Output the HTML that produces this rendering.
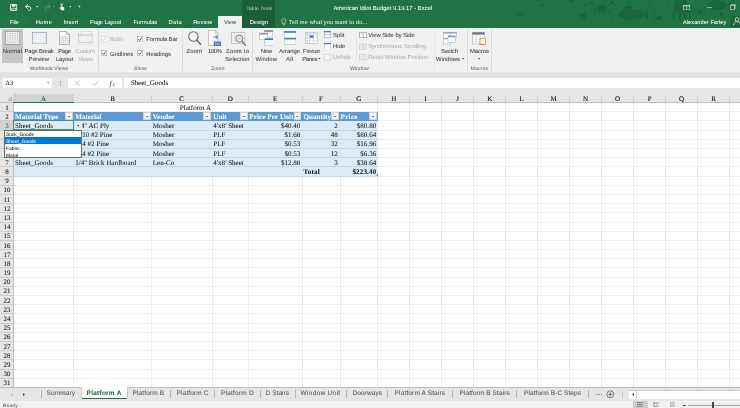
<!DOCTYPE html><html><head><meta charset="utf-8"><title>American Idiot Budget 9.19.17 - Excel</title><style>
*{box-sizing:border-box;margin:0;padding:0}
html,body{width:740px;height:408px;overflow:hidden;background:#fff}
body{position:relative;font-family:"Liberation Sans",sans-serif;color:#444;text-rendering:geometricPrecision;}
.a{position:absolute;white-space:nowrap;}
.t{position:absolute;white-space:nowrap;line-height:1;}
</style></head><body><div id="app" style="position:absolute;left:0;top:0;width:740px;height:408px;will-change:transform">
<div class="a" style="left:0px;top:0px;width:740px;height:27.6px;background:#217346;"></div>
<svg class="a" style="left:440px;top:0px;" width="300" height="27.6" viewBox="0 0 300 27.6"><circle cx="102.5" cy="5" r="1.5" fill="#1b653b"/><circle cx="120" cy="16" r="1" fill="#1b653b"/><circle cx="131" cy="0.3" r="2" fill="#1b653b"/><circle cx="146" cy="5" r="1" fill="#1b653b"/><circle cx="172" cy="20" r="0.9" fill="#1b653b"/><circle cx="209" cy="3" r="1.1" fill="#1b653b"/><circle cx="215" cy="11" r="0.8" fill="#1b653b"/><circle cx="224" cy="9" r="1" fill="#1b653b"/><circle cx="228" cy="4" r="0.9" fill="#1b653b"/><circle cx="296" cy="22" r="0" fill="#1b653b"/><ellipse cx="162" cy="8" rx="5" ry="3.2" fill="#1b653b"/><path d="M156 6L152 3M168 6L172 2.5M157 10L154 13M167 10L170 13M160 11L159 14M164 11L165 14" stroke="#1b653b" stroke-width="1.1" fill="none"/><circle cx="151.5" cy="2.5" r="1.5" fill="#1b653b"/><circle cx="172.5" cy="2" r="1.5" fill="#1b653b"/><path d="M139 17a3.7 3.7 0 0 1 7.4 0Z" fill="#1b653b"/><path d="M140 17v4M142.70000000000005 17v5M145.39999999999998 17v4" stroke="#1b653b" stroke-width="1" fill="none"/><ellipse cx="191" cy="14.5" rx="12.5" ry="5.2" fill="#1b653b"/><path d="M201 14.5L208 9.5V19.5Z" fill="#1b653b"/><rect x="185" y="6.5" width="7" height="4" fill="#1b653b"/><path d="M188.5 7V2.5H191" stroke="#1b653b" stroke-width="1" fill="none"/><ellipse cx="219" cy="18" rx="3" ry="2" fill="#1b653b"/><path d="M216 17L213 14M222 17L225 14M216 19L214 22M222 19L224 22" stroke="#1b653b" stroke-width="0.8" fill="none"/><ellipse cx="241" cy="6" rx="7.2" ry="7.6" fill="#1b653b"/><path d="M236 11Q232 15 234.5 19.5M240 13Q239 18 241 21M244.5 13Q246 17 244.5 20.5M247 10Q251.5 14 250 18" stroke="#1b653b" stroke-width="1.8" fill="none" stroke-linecap="round"/><ellipse cx="277" cy="5.2" rx="9.8" ry="4.9" fill="#1b653b"/><path d="M285.5 5.2L293 0.5V10.5Z" fill="#1b653b"/><ellipse cx="260.5" cy="12.5" rx="2.6" ry="1.6" fill="#1b653b"/><path d="M258 11.5L256 9M263 11.5L265 9M258 13.5L256.5 15.5M263 13.5L264.5 15.5" stroke="#1b653b" stroke-width="0.8" fill="none"/><circle cx="281.6" cy="14.2" r="2" fill="#1b653b"/><g opacity="0.7"><ellipse cx="80" cy="14.5" rx="2.6" ry="1.6" fill="#1b653b"/><path d="M77.5 13.5L75 11M82.5 13.5L85 11M77.5 15.5L75.5 17.5M82.5 15.5L84.5 17.5" stroke="#1b653b" stroke-width="0.8" fill="none"/></g></svg>
<div class="a" style="left:242px;top:0px;width:32.7px;height:27.6px;background:#1b5e3a;"></div>
<div class="a" style="left:0px;top:16px;width:28.9px;height:11.6px;background:#23764a;"></div>
<div class="a" style="left:218px;top:16.2px;width:24px;height:11.4px;background:#f1f1f1;"></div>
<div class="t" style="left:333.4px;top:7px;font-size:5.9px;font-family:'Liberation Sans',sans-serif;color:#fff;text-shadow:0 0 0.4px rgba(255,255,255,0.28);">American Idiot Budget 9.19.17 - Excel</div>
<div class="t" style="left:246.4px;top:8px;font-size:4.8px;font-family:'Liberation Sans',sans-serif;color:#b4cfbf;letter-spacing:0.19px;text-shadow:0 0 0.4px rgba(180,207,191,0.28);">Table Tools</div>
<div class="t" style="left:10.0px;top:21px;font-size:5.7px;font-family:'Liberation Sans',sans-serif;color:#fff;letter-spacing:-0.09px;text-shadow:0 0 0.4px rgba(255,255,255,0.28);">File</div>
<div class="t" style="left:35.7px;top:21px;font-size:5.7px;font-family:'Liberation Sans',sans-serif;color:#fff;letter-spacing:0.33px;text-shadow:0 0 0.4px rgba(255,255,255,0.28);">Home</div>
<div class="t" style="left:63.7px;top:21px;font-size:5.7px;font-family:'Liberation Sans',sans-serif;color:#fff;letter-spacing:0.05px;text-shadow:0 0 0.4px rgba(255,255,255,0.28);">Insert</div>
<div class="t" style="left:90.0px;top:21px;font-size:5.7px;font-family:'Liberation Sans',sans-serif;color:#fff;letter-spacing:-0.09px;text-shadow:0 0 0.4px rgba(255,255,255,0.28);">Page Layout</div>
<div class="t" style="left:133.4px;top:21px;font-size:5.7px;font-family:'Liberation Sans',sans-serif;color:#fff;letter-spacing:0.01px;text-shadow:0 0 0.4px rgba(255,255,255,0.28);">Formulas</div>
<div class="t" style="left:168.6px;top:21px;font-size:5.7px;font-family:'Liberation Sans',sans-serif;color:#fff;letter-spacing:0.32px;text-shadow:0 0 0.4px rgba(255,255,255,0.28);">Data</div>
<div class="t" style="left:193.2px;top:21px;font-size:5.7px;font-family:'Liberation Sans',sans-serif;color:#fff;letter-spacing:0.04px;text-shadow:0 0 0.4px rgba(255,255,255,0.28);">Review</div>
<div class="t" style="left:249.7px;top:21px;font-size:5.7px;font-family:'Liberation Sans',sans-serif;color:#fff;letter-spacing:0.13px;text-shadow:0 0 0.4px rgba(255,255,255,0.28);">Design</div>
<div class="t" style="left:223.9px;top:21px;font-size:5.7px;font-family:'Liberation Sans',sans-serif;color:#217346;letter-spacing:-0.02px;text-shadow:0 0 0.4px rgba(33,115,70,0.28);">View</div>
<div class="t" style="left:289.1px;top:21px;font-size:5.7px;font-family:'Liberation Sans',sans-serif;color:#e2eee7;letter-spacing:0.12px;text-shadow:0 0 0.4px rgba(226,238,231,0.28);">Tell me what you want to do...</div>
<div class="t" style="left:683.0px;top:21px;font-size:5.5px;font-family:'Liberation Sans',sans-serif;color:#fff;letter-spacing:0.11px;text-shadow:0 0 0.4px rgba(255,255,255,0.28);">Alexander Farley</div>
<div class="a" style="left:0px;top:27.6px;width:740px;height:44.2px;background:#f1f1f1;"></div>
<div class="a" style="left:0px;top:71.8px;width:740px;height:6.2px;background:#e2e2e2;"></div>
<div class="a" style="left:0px;top:78px;width:740px;height:16.3px;background:#e6e6e6;"></div>
<div class="a" style="left:2px;top:29px;width:21.3px;height:33.6px;background:#c6c6c6;"></div>
<div class="a" style="left:98.1px;top:29.5px;width:0.6px;height:41px;background:#dadada;"></div>
<div class="a" style="left:182.3px;top:29.5px;width:0.6px;height:41px;background:#dadada;"></div>
<div class="a" style="left:252.1px;top:29.5px;width:0.6px;height:41px;background:#dadada;"></div>
<div class="a" style="left:466.7px;top:29.5px;width:0.6px;height:41px;background:#dadada;"></div>
<div class="a" style="left:491.2px;top:29.5px;width:0.6px;height:41px;background:#dadada;"></div>
<div class="a" style="left:355.8px;top:34px;width:0.5px;height:24px;background:#e6e6e6;"></div>
<div class="a" style="left:433.5px;top:30px;width:0.5px;height:40px;background:#e6e6e6;"></div>
<div class="t" style="left:2.7px;top:50px;font-size:5.9px;font-family:'Liberation Sans',sans-serif;color:#444;letter-spacing:0.06px;text-shadow:0 0 0.4px rgba(68,68,68,0.28);">Normal</div>
<div class="t" style="left:24.6px;top:50px;font-size:5.9px;font-family:'Liberation Sans',sans-serif;color:#444;letter-spacing:-0.18px;text-shadow:0 0 0.4px rgba(68,68,68,0.28);">Page Break</div>
<div class="t" style="left:28.6px;top:58px;font-size:5.9px;font-family:'Liberation Sans',sans-serif;color:#444;letter-spacing:-0.1px;text-shadow:0 0 0.4px rgba(68,68,68,0.28);">Preview</div>
<div class="t" style="left:58.29px;top:50px;font-size:5.9px;font-family:'Liberation Sans',sans-serif;color:#444;letter-spacing:-0.35px;text-shadow:0 0 0.4px rgba(68,68,68,0.28);">Page</div>
<div class="t" style="left:55.9px;top:58px;font-size:5.9px;font-family:'Liberation Sans',sans-serif;color:#444;letter-spacing:-0.08px;text-shadow:0 0 0.4px rgba(68,68,68,0.28);">Layout</div>
<div class="t" style="left:75.6px;top:50px;font-size:5.9px;font-family:'Liberation Sans',sans-serif;color:#b3b3b3;letter-spacing:-0.19px;text-shadow:0 0 0.4px rgba(179,179,179,0.28);">Custom</div>
<div class="t" style="left:78.2px;top:58px;font-size:5.9px;font-family:'Liberation Sans',sans-serif;color:#b3b3b3;letter-spacing:-0.21px;text-shadow:0 0 0.4px rgba(179,179,179,0.28);">Views</div>
<div class="t" style="left:186.6px;top:50px;font-size:5.9px;font-family:'Liberation Sans',sans-serif;color:#444;letter-spacing:0.11px;text-shadow:0 0 0.4px rgba(68,68,68,0.28);">Zoom</div>
<div class="t" style="left:207.9px;top:50px;font-size:5.9px;font-family:'Liberation Sans',sans-serif;color:#444;letter-spacing:-0.33px;text-shadow:0 0 0.4px rgba(68,68,68,0.28);">100%</div>
<div class="t" style="left:226.1px;top:50px;font-size:5.9px;font-family:'Liberation Sans',sans-serif;color:#444;letter-spacing:0.21px;text-shadow:0 0 0.4px rgba(68,68,68,0.28);">Zoom to</div>
<div class="t" style="left:225.1px;top:58px;font-size:5.9px;font-family:'Liberation Sans',sans-serif;color:#444;letter-spacing:0.04px;text-shadow:0 0 0.4px rgba(68,68,68,0.28);">Selection</div>
<div class="t" style="left:260.7px;top:50px;font-size:5.9px;font-family:'Liberation Sans',sans-serif;color:#444;letter-spacing:-0.2px;text-shadow:0 0 0.4px rgba(68,68,68,0.28);">New</div>
<div class="t" style="left:255.5px;top:58px;font-size:5.9px;font-family:'Liberation Sans',sans-serif;color:#444;letter-spacing:0.1px;text-shadow:0 0 0.4px rgba(68,68,68,0.28);">Window</div>
<div class="t" style="left:279.3px;top:50px;font-size:5.9px;font-family:'Liberation Sans',sans-serif;color:#444;letter-spacing:-0.05px;text-shadow:0 0 0.4px rgba(68,68,68,0.28);">Arrange</div>
<div class="t" style="left:286.1px;top:58px;font-size:5.9px;font-family:'Liberation Sans',sans-serif;color:#444;letter-spacing:0.22px;text-shadow:0 0 0.4px rgba(68,68,68,0.28);">All</div>
<div class="t" style="left:303.1px;top:50px;font-size:5.9px;font-family:'Liberation Sans',sans-serif;color:#444;letter-spacing:-0.23px;text-shadow:0 0 0.4px rgba(68,68,68,0.28);">Freeze</div>
<div class="t" style="left:302.14px;top:58px;font-size:5.9px;font-family:'Liberation Sans',sans-serif;color:#444;letter-spacing:-0.35px;text-shadow:0 0 0.4px rgba(68,68,68,0.28);">Panes</div>
<div class="t" style="left:441.1px;top:50px;font-size:5.9px;font-family:'Liberation Sans',sans-serif;color:#444;letter-spacing:-0.06px;text-shadow:0 0 0.4px rgba(68,68,68,0.28);">Switch</div>
<div class="t" style="left:436.1px;top:58px;font-size:5.9px;font-family:'Liberation Sans',sans-serif;color:#444;letter-spacing:-0.01px;text-shadow:0 0 0.4px rgba(68,68,68,0.28);">Windows</div>
<div class="t" style="left:469.9px;top:50px;font-size:5.9px;font-family:'Liberation Sans',sans-serif;color:#444;letter-spacing:-0.03px;text-shadow:0 0 0.4px rgba(68,68,68,0.28);">Macros</div>
<div class="t" style="left:29.6px;top:67px;font-size:5.1px;font-family:'Liberation Sans',sans-serif;color:#6a6a6a;letter-spacing:0.05px;text-shadow:0 0 0.4px rgba(106,106,106,0.28);">Workbook Views</div>
<div class="t" style="left:134.0px;top:67px;font-size:5.1px;font-family:'Liberation Sans',sans-serif;color:#6a6a6a;letter-spacing:0.01px;text-shadow:0 0 0.4px rgba(106,106,106,0.28);">Show</div>
<div class="t" style="left:211.0px;top:67px;font-size:5.1px;font-family:'Liberation Sans',sans-serif;color:#6a6a6a;letter-spacing:0.15px;text-shadow:0 0 0.4px rgba(106,106,106,0.28);">Zoom</div>
<div class="t" style="left:350.0px;top:67px;font-size:5.1px;font-family:'Liberation Sans',sans-serif;color:#6a6a6a;letter-spacing:0.09px;text-shadow:0 0 0.4px rgba(106,106,106,0.28);">Window</div>
<div class="t" style="left:470.5px;top:67px;font-size:5.1px;font-family:'Liberation Sans',sans-serif;color:#6a6a6a;letter-spacing:0.16px;text-shadow:0 0 0.4px rgba(106,106,106,0.28);">Macros</div>
<svg class="a" style="left:318.4px;top:58.2px;" width="2.6" height="1.7" viewBox="0 0 2.6 1.7"><path d="M0 0H2.6L1.3 1.6Z" fill="#555"/></svg>
<svg class="a" style="left:461.9px;top:58.2px;" width="2.6" height="1.7" viewBox="0 0 2.6 1.7"><path d="M0 0H2.6L1.3 1.6Z" fill="#555"/></svg>
<svg class="a" style="left:478.1px;top:58.2px;" width="2.6" height="1.7" viewBox="0 0 2.6 1.7"><path d="M0 0H2.6L1.3 1.6Z" fill="#555"/></svg>
<svg class="a" style="left:101.3px;top:35.5px;" width="6.2" height="6.2" viewBox="0 0 6.2 6.2"><rect x="0.3" y="0.3" width="5.6" height="5.6" fill="#fdfdfd" stroke="#d2d2d2" stroke-width="0.5"/><path d="M1.3 3.1L2.6 4.5L4.9 1.5" fill="none" stroke="#c4c4c4" stroke-width="0.8"/></svg>
<svg class="a" style="left:101.3px;top:50.3px;" width="6.2" height="6.2" viewBox="0 0 6.2 6.2"><rect x="0.3" y="0.3" width="5.6" height="5.6" fill="#fdfdfd" stroke="#8e8e8e" stroke-width="0.5"/><path d="M1.3 3.1L2.6 4.5L4.9 1.5" fill="none" stroke="#2e2e2e" stroke-width="0.8"/></svg>
<svg class="a" style="left:137.3px;top:35.5px;" width="6.2" height="6.2" viewBox="0 0 6.2 6.2"><rect x="0.3" y="0.3" width="5.6" height="5.6" fill="#fdfdfd" stroke="#8e8e8e" stroke-width="0.5"/><path d="M1.3 3.1L2.6 4.5L4.9 1.5" fill="none" stroke="#2e2e2e" stroke-width="0.8"/></svg>
<svg class="a" style="left:137.3px;top:50.3px;" width="6.2" height="6.2" viewBox="0 0 6.2 6.2"><rect x="0.3" y="0.3" width="5.6" height="5.6" fill="#fdfdfd" stroke="#8e8e8e" stroke-width="0.5"/><path d="M1.3 3.1L2.6 4.5L4.9 1.5" fill="none" stroke="#2e2e2e" stroke-width="0.8"/></svg>
<div class="t" style="left:110.0px;top:38px;font-size:5.9px;font-family:'Liberation Sans',sans-serif;color:#b3b3b3;letter-spacing:-0.15px;text-shadow:0 0 0.4px rgba(179,179,179,0.28);">Ruler</div>
<div class="t" style="left:110.0px;top:53px;font-size:5.9px;font-family:'Liberation Sans',sans-serif;color:#444;letter-spacing:-0.01px;text-shadow:0 0 0.4px rgba(68,68,68,0.28);">Gridlines</div>
<div class="t" style="left:146.3px;top:38px;font-size:5.9px;font-family:'Liberation Sans',sans-serif;color:#444;letter-spacing:-0.12px;text-shadow:0 0 0.4px rgba(68,68,68,0.28);">Formula Bar</div>
<div class="t" style="left:146.3px;top:53px;font-size:5.9px;font-family:'Liberation Sans',sans-serif;color:#444;letter-spacing:-0.03px;text-shadow:0 0 0.4px rgba(68,68,68,0.28);">Headings</div>
<div class="t" style="left:333.0px;top:34px;font-size:5.9px;font-family:'Liberation Sans',sans-serif;color:#444;letter-spacing:-0.04px;text-shadow:0 0 0.4px rgba(68,68,68,0.28);">Split</div>
<div class="t" style="left:333.0px;top:45px;font-size:5.9px;font-family:'Liberation Sans',sans-serif;color:#444;letter-spacing:0.06px;text-shadow:0 0 0.4px rgba(68,68,68,0.28);">Hide</div>
<div class="t" style="left:333.0px;top:56px;font-size:5.9px;font-family:'Liberation Sans',sans-serif;color:#b3b3b3;letter-spacing:-0.08px;text-shadow:0 0 0.4px rgba(179,179,179,0.28);">Unhide</div>
<div class="t" style="left:368.2px;top:34px;font-size:5.9px;font-family:'Liberation Sans',sans-serif;color:#444;letter-spacing:-0.05px;text-shadow:0 0 0.4px rgba(68,68,68,0.28);">View Side by Side</div>
<div class="t" style="left:368.2px;top:45px;font-size:5.9px;font-family:'Liberation Sans',sans-serif;color:#b3b3b3;letter-spacing:-0.04px;text-shadow:0 0 0.4px rgba(179,179,179,0.28);">Synchronous Scrolling</div>
<div class="t" style="left:368.2px;top:56px;font-size:5.9px;font-family:'Liberation Sans',sans-serif;color:#b3b3b3;letter-spacing:-0.02px;text-shadow:0 0 0.4px rgba(179,179,179,0.28);">Reset Window Position</div>
<svg class="a" style="left:4.5px;top:31.1px;" width="15.2" height="13.7" viewBox="0 0 15.2 13.7"><rect x="0.4" y="0.4" width="14.4" height="12.9" fill="#fff" stroke="#8a8a8a" stroke-width="0.7"/><path d="M2.85 0.4V13.3" stroke="#b2b2b2" stroke-width="0.45"/><path d="M5.300000000000001 0.4V13.3" stroke="#b2b2b2" stroke-width="0.45"/><path d="M7.750000000000001 0.4V13.3" stroke="#b2b2b2" stroke-width="0.45"/><path d="M10.200000000000001 0.4V13.3" stroke="#b2b2b2" stroke-width="0.45"/><path d="M12.65 0.4V13.3" stroke="#b2b2b2" stroke-width="0.45"/><path d="M0.4 2.55H14.8" stroke="#b2b2b2" stroke-width="0.45"/><path d="M0.4 4.7H14.8" stroke="#b2b2b2" stroke-width="0.45"/><path d="M0.4 6.85H14.8" stroke="#b2b2b2" stroke-width="0.45"/><path d="M0.4 9.0H14.8" stroke="#b2b2b2" stroke-width="0.45"/><path d="M0.4 11.15H14.8" stroke="#b2b2b2" stroke-width="0.45"/></svg>
<svg class="a" style="left:32px;top:32px;" width="15" height="12.2" viewBox="0 0 15 12.2"><rect x="0.4" y="0.4" width="14.2" height="11.4" fill="#fff" stroke="#9a9a9a" stroke-width="0.7"/><rect x="1.2" y="1.2" width="1.5" height="1.3" fill="#cfe0f4"/><rect x="1.2" y="3.0" width="1.5" height="1.3" fill="#cfe0f4"/><rect x="1.2" y="4.8" width="1.5" height="1.3" fill="#cfe0f4"/><rect x="1.2" y="6.9" width="1.5" height="1.3" fill="#cfe0f4"/><rect x="1.2" y="8.7" width="1.5" height="1.3" fill="#cfe0f4"/><rect x="1.2" y="10.2" width="1.5" height="1.3" fill="#cfe0f4"/><rect x="3.2" y="1.2" width="1.5" height="1.3" fill="#cfe0f4"/><rect x="3.2" y="3.0" width="1.5" height="1.3" fill="#cfe0f4"/><rect x="3.2" y="4.8" width="1.5" height="1.3" fill="#cfe0f4"/><rect x="3.2" y="6.9" width="1.5" height="1.3" fill="#cfe0f4"/><rect x="3.2" y="8.7" width="1.5" height="1.3" fill="#cfe0f4"/><rect x="3.2" y="10.2" width="1.5" height="1.3" fill="#cfe0f4"/><rect x="5.9" y="1.2" width="1.5" height="1.3" fill="#cfe0f4"/><rect x="5.9" y="3.0" width="1.5" height="1.3" fill="#cfe0f4"/><rect x="5.9" y="4.8" width="1.5" height="1.3" fill="#cfe0f4"/><rect x="5.9" y="6.9" width="1.5" height="1.3" fill="#cfe0f4"/><rect x="5.9" y="8.7" width="1.5" height="1.3" fill="#cfe0f4"/><rect x="5.9" y="10.2" width="1.5" height="1.3" fill="#cfe0f4"/><rect x="7.9" y="1.2" width="1.5" height="1.3" fill="#cfe0f4"/><rect x="7.9" y="3.0" width="1.5" height="1.3" fill="#cfe0f4"/><rect x="7.9" y="4.8" width="1.5" height="1.3" fill="#cfe0f4"/><rect x="7.9" y="6.9" width="1.5" height="1.3" fill="#cfe0f4"/><rect x="7.9" y="8.7" width="1.5" height="1.3" fill="#cfe0f4"/><rect x="7.9" y="10.2" width="1.5" height="1.3" fill="#cfe0f4"/><rect x="10.6" y="1.2" width="1.5" height="1.3" fill="#cfe0f4"/><rect x="10.6" y="3.0" width="1.5" height="1.3" fill="#cfe0f4"/><rect x="10.6" y="4.8" width="1.5" height="1.3" fill="#cfe0f4"/><rect x="10.6" y="6.9" width="1.5" height="1.3" fill="#cfe0f4"/><rect x="10.6" y="8.7" width="1.5" height="1.3" fill="#cfe0f4"/><rect x="10.6" y="10.2" width="1.5" height="1.3" fill="#cfe0f4"/><rect x="12.4" y="1.2" width="1.5" height="1.3" fill="#cfe0f4"/><rect x="12.4" y="3.0" width="1.5" height="1.3" fill="#cfe0f4"/><rect x="12.4" y="4.8" width="1.5" height="1.3" fill="#cfe0f4"/><rect x="12.4" y="6.9" width="1.5" height="1.3" fill="#cfe0f4"/><rect x="12.4" y="8.7" width="1.5" height="1.3" fill="#cfe0f4"/><rect x="12.4" y="10.2" width="1.5" height="1.3" fill="#cfe0f4"/></svg>
<svg class="a" style="left:59px;top:31.1px;" width="11" height="13.9" viewBox="0 0 11 13.9"><path d="M0.4 0.4H7.4L10.5 3.5V13.4H0.4Z" fill="#fff" stroke="#8a8a8a" stroke-width="0.7"/><path d="M7.4 0.4V3.5H10.5" fill="none" stroke="#8a8a8a" stroke-width="0.6"/><path d="M1.8 5.5H9.2M1.8 7.6H9.2M1.8 9.7H9.2M1.8 11.8H9.2M1.8 5.5V11.8M4.3 5.5V11.8M6.8 5.5V11.8M9.2 5.5V11.8" stroke="#b5b5b5" stroke-width="0.5" fill="none"/></svg>
<svg class="a" style="left:78px;top:31.4px;" width="15.2" height="13.7" viewBox="0 0 15.2 13.7"><rect x="2.2" y="0.4" width="11" height="9.5" fill="#f6f6f6" stroke="#cfcfcf" stroke-width="0.6"/><rect x="0.4" y="3" width="14.3" height="8.5" fill="#f3eef3" stroke="#c9c9c9" stroke-width="0.7"/><path d="M0.4 4.3H14.7" stroke="#c9c9c9" stroke-width="0.9"/><rect x="3.8" y="11.5" width="9.5" height="1.8" fill="none" stroke="#d4d4d4" stroke-width="0.5"/></svg>
<svg class="a" style="left:186px;top:30px;" width="18" height="17" viewBox="0 0 18 17"><circle cx="7.4" cy="6.5" r="4.7" fill="#f7f7f7" stroke="#6a6a6a" stroke-width="1.1"/><path d="M10.9 10.2L14.6 14.3" stroke="#6a6a6a" stroke-width="1.6" stroke-linecap="round"/></svg>
<svg class="a" style="left:208.2px;top:30px;" width="13.2" height="16.2" viewBox="0 0 13.2 16.2"><path d="M0.4 0.4H7.2L10 3.2V15.4H0.4Z" fill="#fff" stroke="#9a9a9a" stroke-width="0.6"/><path d="M7.2 0.4V3.2H10" fill="none" stroke="#9a9a9a" stroke-width="0.5"/><path d="M5.2 7H9.6M7.8 5L9.8 7L7.8 9" fill="none" stroke="#2b72c4" stroke-width="1"/><rect x="5.8" y="11.5" width="7.2" height="4.5" fill="#3b78c2"/><text x="9.4" y="15" font-size="3.2" fill="#dfe9f6" text-anchor="middle" font-family="Liberation Sans, sans-serif">100</text></svg>
<svg class="a" style="left:230.5px;top:32px;" width="15.5" height="14" viewBox="0 0 15.5 14"><rect x="0.4" y="0.4" width="13.4" height="11" fill="#fff" stroke="#a5a5a5" stroke-width="0.6"/><path d="M3.8 0.4V11.4M7.2 0.4V11.4M10.6 0.4V11.4M0.4 3.2H13.8M0.4 6H13.8M0.4 8.8H13.8" stroke="#bdbdbd" stroke-width="0.45"/><circle cx="8.3" cy="6.6" r="3.5" fill="#eef3fa" stroke="#707070" stroke-width="0.9"/><rect x="6.6" y="5" width="3.6" height="2.6" fill="#c3d8f0"/><path d="M11 9.4L14.6 13.2" stroke="#707070" stroke-width="1.3" stroke-linecap="round"/></svg>
<svg class="a" style="left:258.9px;top:30.3px;" width="14.6" height="15.6" viewBox="0 0 14.6 15.6"><rect x="5.2" y="0.4" width="8.6" height="6.6" fill="#fff" stroke="#a5a5a5" stroke-width="0.5"/><rect x="5.2" y="0.4" width="8.6" height="1.4" fill="#7a7a7a"/><rect x="0.4" y="3.1" width="8.4" height="6.6" fill="#fff" stroke="#a5a5a5" stroke-width="0.5"/><rect x="0.4" y="3.1" width="8.4" height="1.4" fill="#8a8a8a"/><rect x="5.8" y="8.4" width="8.4" height="6.8" fill="#fff" stroke="#a5a5a5" stroke-width="0.5"/><rect x="5.8" y="8.4" width="8.4" height="1.6" fill="#3b78c2"/></svg>
<svg class="a" style="left:283.7px;top:31px;" width="12.4" height="14" viewBox="0 0 12.4 14"><rect x="0.4" y="0.4" width="11.6" height="13.2" fill="#fff" stroke="#a5a5a5" stroke-width="0.5"/><rect x="0.2" y="0.2" width="12" height="1.6" fill="#3b78c2"/><rect x="0.2" y="6.8" width="12" height="1.6" fill="#3b78c2"/></svg>
<svg class="a" style="left:305.4px;top:32px;" width="13.3" height="11.9" viewBox="0 0 13.3 11.9"><rect x="0.4" y="0.4" width="12.4" height="11" fill="#fff" stroke="#a5a5a5" stroke-width="0.5"/><path d="M4.4 0.4V11.4M8.6 0.4V11.4M0.4 3.2H12.8M0.4 6H12.8M0.4 8.8H12.8" stroke="#bdbdbd" stroke-width="0.45"/><rect x="4.6" y="3.4" width="3.8" height="2.4" fill="#3b78c2"/><path d="M0.6 1.8H12.6M2.4 0.6V11.2" stroke="#6fa0d8" stroke-width="0.6" stroke-dasharray="1 0.8"/></svg>
<svg class="a" style="left:323.9px;top:31.4px;" width="7.2" height="6.8" viewBox="0 0 7.2 6.8"><rect x="0.3" y="0.3" width="6.5" height="6.1" fill="#fff" stroke="#8a8a8a" stroke-width="0.5"/><rect x="0.1" y="0.1" width="6.9" height="1.2" fill="#3b78c2"/><path d="M0.3 3.7H6.8" stroke="#8a8a8a" stroke-width="0.5"/></svg>
<svg class="a" style="left:323.9px;top:42.5px;" width="7.2" height="6.8" viewBox="0 0 7.2 6.8"><rect x="0.3" y="0.3" width="6.5" height="6.1" fill="#fff" stroke="#a5a5a5" stroke-width="0.5"/><rect x="0.1" y="0.1" width="6.9" height="1.2" fill="#3b78c2"/></svg>
<svg class="a" style="left:323.9px;top:54.1px;" width="7.2" height="6.8" viewBox="0 0 7.2 6.8"><rect x="0.3" y="0.3" width="6.5" height="6.1" fill="#f7f2f7" stroke="#c8c8c8" stroke-width="0.5"/></svg>
<svg class="a" style="left:359px;top:31.8px;" width="8" height="6" viewBox="0 0 8 6"><path d="M0.4 0.6H3.2L4 1.6L4.8 0.6H7.6V5.6H0.4Z" fill="#fff" stroke="#666" stroke-width="0.5"/><path d="M4 1.6V5.6" stroke="#666" stroke-width="0.5"/></svg>
<svg class="a" style="left:359px;top:42.8px;" width="8" height="7" viewBox="0 0 8 7"><path d="M0.4 1H3.8V6.4H0.4ZM4.6 1H7V6.4H4.6Z M2 2.4V5" fill="none" stroke="#bdbdbd" stroke-width="0.5"/><path d="M7.6 0.2V6.8" stroke="#c8c8c8" stroke-width="0.5"/></svg>
<svg class="a" style="left:359px;top:54.4px;" width="8" height="6" viewBox="0 0 8 6"><path d="M0.4 0.5H7.6V5.6H0.4Z M4 0.5V5.6M1.4 3H3M5 3H6.6" fill="none" stroke="#bdbdbd" stroke-width="0.5"/></svg>
<svg class="a" style="left:443.2px;top:32px;" width="14" height="12.6" viewBox="0 0 14 12.6"><rect x="0.4" y="0.4" width="7" height="11.6" fill="#fff" stroke="#a5a5a5" stroke-width="0.5"/><rect x="0.4" y="0.4" width="7" height="1" fill="#8a8a8a"/><rect x="7.4" y="0.4" width="6.2" height="5.6" fill="#fff" stroke="#a5a5a5" stroke-width="0.5"/><rect x="7.4" y="0.4" width="6.2" height="1" fill="#8a8a8a"/><rect x="0.4" y="6" width="4.6" height="1.2" fill="#9a9a9a"/><rect x="5" y="3.8" width="7.2" height="6.6" fill="#fff" stroke="#a5a5a5" stroke-width="0.5"/><rect x="5" y="3.8" width="7.2" height="1.5" fill="#6fa0d8"/></svg>
<svg class="a" style="left:471.9px;top:32px;" width="15" height="13.6" viewBox="0 0 15 13.6"><rect x="0.4" y="0.4" width="12" height="11.6" fill="#fff" stroke="#a5a5a5" stroke-width="0.5"/><rect x="0.4" y="0.4" width="12" height="2.2" fill="#6e6e6e"/><path d="M0.4 5H12.4M0.4 7.4H12.4M0.4 9.8H12.4M4.4 2.6V12M8.4 2.6V12" stroke="#c4c4c4" stroke-width="0.45"/><path d="M8 6.6H13.6V12.6H8Z" fill="#fff" stroke="#e8823a" stroke-width="0.8"/><path d="M7.2 12.3H12.6" stroke="#e8823a" stroke-width="1.1"/><path d="M13.6 6.2L14.5 7.2H13.6Z" fill="#e8823a"/></svg>
<svg class="a" style="left:10.4px;top:3.8px;" width="7.6" height="7" viewBox="0 0 7.6 7"><path d="M0.5 0.5H6.7V6.3H0.5Z" fill="none" stroke="#fff" stroke-width="0.8"/><rect x="1.8" y="0.5" width="3.6" height="2.2" fill="#fff"/><rect x="1.8" y="4.2" width="3.6" height="2.1" fill="none" stroke="#fff" stroke-width="0.6"/></svg>
<svg class="a" style="left:25.4px;top:3.8px;" width="8" height="7" viewBox="0 0 8 7"><path d="M0.6 2.6H4.6A2.1 2.1 0 0 1 4.6 6.4H3.4" fill="none" stroke="#fff" stroke-width="0.9"/><path d="M2.9 0.4L0.5 2.6L2.9 4.8" fill="none" stroke="#fff" stroke-width="0.9"/></svg>
<svg class="a" style="left:42.6px;top:3.8px;" width="8" height="7" viewBox="0 0 8 7"><path d="M7.2 2.6H3.2A2.1 2.1 0 0 0 3.2 6.4H4.4" fill="none" stroke="#5f9a7b" stroke-width="0.8"/><path d="M4.9 0.4L7.3 2.6L4.9 4.8" fill="none" stroke="#5f9a7b" stroke-width="0.8"/></svg>
<svg class="a" style="left:59.2px;top:3.4px;" width="6" height="7.8" viewBox="0 0 6 7.8"><circle cx="2.6" cy="1.5" r="1.1" fill="none" stroke="#fff" stroke-width="0.5"/><path d="M2.2 1.5V4.6L1 4.2L0.6 4.8L2.4 7.2H5.2V4.4L3.2 3.8V1.5Z" fill="#fff"/></svg>
<svg class="a" style="left:35.6px;top:6px;" width="2.4" height="1.6" viewBox="0 0 2.4 1.6"><path d="M0 0H2.4L1.2 1.4Z" fill="#dfeee5"/></svg>
<svg class="a" style="left:53.1px;top:6px;" width="2.4" height="1.6" viewBox="0 0 2.4 1.6"><path d="M0 0H2.4L1.2 1.4Z" fill="#5f9a7b"/></svg>
<svg class="a" style="left:68.7px;top:6px;" width="2.4" height="1.6" viewBox="0 0 2.4 1.6"><path d="M0 0H2.4L1.2 1.4Z" fill="#dfeee5"/></svg>
<svg class="a" style="left:78.3px;top:5px;" width="2.6" height="3" viewBox="0 0 2.6 3"><path d="M0.2 0.3H2.4" stroke="#cfe3d7" stroke-width="0.5"/><path d="M0.1 1.3H2.5L1.3 2.7Z" fill="#cfe3d7"/></svg>
<svg class="a" style="left:683px;top:4.7px;" width="7.2" height="5.4" viewBox="0 0 7.2 5.4"><rect x="0.35" y="0.35" width="6.5" height="4.6" fill="none" stroke="#dcebe2" stroke-width="0.6"/><path d="M3.6 0.4V5M0.4 1H6.8" stroke="#dcebe2" stroke-width="0.6"/></svg>
<div class="a" style="left:707px;top:6.5px;width:5px;height:0.6px;background:#86b39b;"></div>
<svg class="a" style="left:729.8px;top:4.2px;" width="5.8" height="6" viewBox="0 0 5.8 6"><rect x="0.35" y="1.3" width="3.9" height="4.2" fill="none" stroke="#dcebe2" stroke-width="0.6"/><path d="M1.5 1.3V0.35H5.3V4.6H4.3" fill="none" stroke="#dcebe2" stroke-width="0.55"/></svg>
<div class="a" style="left:730.5px;top:16px;width:9.5px;height:10.5px;background:#1b5e3a;"></div>
<svg class="a" style="left:732.6px;top:17px;" width="8" height="9" viewBox="0 0 8 9"><circle cx="4.1" cy="2.5" r="1.9" fill="none" stroke="#fff" stroke-width="0.7"/><path d="M0.5 8.6C0.8 5.6 2.3 4.6 4.1 4.6C5.9 4.6 7.3 5.6 7.6 8.6" fill="none" stroke="#fff" stroke-width="0.7"/></svg>
<svg class="a" style="left:281px;top:18px;" width="5.6" height="7.6" viewBox="0 0 5.6 7.6"><path d="M2.8 0.5A2.1 2.1 0 0 1 4.1 4.2V5.3H1.5V4.2A2.1 2.1 0 0 1 2.8 0.5Z" fill="none" stroke="#e4efe8" stroke-width="0.55"/><path d="M1.6 6.1H4M1.9 7H3.7" stroke="#e4efe8" stroke-width="0.45"/></svg>
<div class="a" style="left:2.6px;top:77.9px;width:49.8px;height:10.1px;background:#fff;"></div>
<div class="a" style="left:68.2px;top:77.9px;width:53.9px;height:10.1px;background:#fff;"></div>
<div class="a" style="left:124.4px;top:77.9px;width:615.6px;height:10.1px;background:#fff;"></div>
<div class="t" style="left:5.3px;top:81px;font-size:6.6px;font-family:'Liberation Serif',serif;color:#333;text-shadow:0 0 0.4px rgba(51,51,51,0.28);">A3</div>
<div class="t" style="left:130.7px;top:80px;font-size:7.05px;font-family:'Liberation Serif',serif;color:#222;letter-spacing:-0.01px;text-shadow:0 0 0.4px rgba(34,34,34,0.28);">Sheet_Goods</div>
<svg class="a" style="left:73.6px;top:79.8px;" width="6.6" height="6.4" viewBox="0 0 6.6 6.4"><path d="M0.6 0.6L6 5.8M6 0.6L0.6 5.8" stroke="#a8a8a8" stroke-width="0.65"/></svg>
<svg class="a" style="left:91.6px;top:79.8px;" width="7" height="6.4" viewBox="0 0 7 6.4"><path d="M0.5 3.4L2.5 5.6L6.5 0.6" fill="none" stroke="#a8a8a8" stroke-width="0.7"/></svg>
<div class="t" style="left:109.4px;top:80px;font-size:7.6px;font-family:'Liberation Serif',serif;font-style:italic;color:#4a4a4a;text-shadow:0 0 0.4px rgba(74,74,74,0.28);">f</div>
<div class="t" style="left:112.6px;top:83px;font-size:5.5px;font-family:'Liberation Serif',serif;font-style:italic;color:#4a4a4a;text-shadow:0 0 0.4px rgba(74,74,74,0.28);">x</div>
<svg class="a" style="left:46.6px;top:82.1px;" width="2.6" height="1.7" viewBox="0 0 2.6 1.7"><path d="M0 0H2.6L1.3 1.6Z" fill="#888"/></svg>
<div class="a" style="left:60.3px;top:80.6px;width:0.6px;height:0.6px;background:#b0b0b0;"></div>
<div class="a" style="left:60.3px;top:82.05px;width:0.6px;height:0.6px;background:#b0b0b0;"></div>
<div class="a" style="left:60.3px;top:83.5px;width:0.6px;height:0.6px;background:#b0b0b0;"></div>
<div class="a" style="left:60.3px;top:84.95px;width:0.6px;height:0.6px;background:#b0b0b0;"></div>
<div class="a" style="left:0px;top:94.2px;width:740px;height:8.17px;background:#e6e6e6;"></div>
<div class="a" style="left:13.4px;top:94.2px;width:60.3px;height:8.17px;background:#d2d2d2;"></div>
<div class="a" style="left:0px;top:102.37px;width:13.4px;height:284.89px;background:#e6e6e6;"></div>
<div class="a" style="left:0px;top:120.75px;width:13.4px;height:9.19px;background:#d2d2d2;"></div>
<svg class="a" style="left:7px;top:96.2px;" width="5.4" height="4.9" viewBox="0 0 5.4 4.9"><path d="M5.4 0V4.9H0Z" fill="#bdbdbd"/></svg>
<div class="a" style="left:73.4px;top:95.2px;width:0.6px;height:7.17px;background:#d2d2d2;"></div>
<div class="a" style="left:73.4px;top:175.89px;width:0.6px;height:211.37px;background:#eaeaea;"></div>
<div class="a" style="left:151.0px;top:95.2px;width:0.6px;height:7.17px;background:#d2d2d2;"></div>
<div class="a" style="left:151.0px;top:175.89px;width:0.6px;height:211.37px;background:#eaeaea;"></div>
<div class="a" style="left:211.5px;top:95.2px;width:0.6px;height:7.17px;background:#d2d2d2;"></div>
<div class="a" style="left:211.5px;top:175.89px;width:0.6px;height:211.37px;background:#eaeaea;"></div>
<div class="a" style="left:248.3px;top:95.2px;width:0.6px;height:7.17px;background:#d2d2d2;"></div>
<div class="a" style="left:248.3px;top:175.89px;width:0.6px;height:211.37px;background:#eaeaea;"></div>
<div class="a" style="left:301.6px;top:95.2px;width:0.6px;height:7.17px;background:#d2d2d2;"></div>
<div class="a" style="left:301.6px;top:175.89px;width:0.6px;height:211.37px;background:#eaeaea;"></div>
<div class="a" style="left:339.5px;top:95.2px;width:0.6px;height:7.17px;background:#d2d2d2;"></div>
<div class="a" style="left:339.5px;top:175.89px;width:0.6px;height:211.37px;background:#eaeaea;"></div>
<div class="a" style="left:377.4px;top:95.2px;width:0.6px;height:7.17px;background:#d2d2d2;"></div>
<div class="a" style="left:377.4px;top:102.37px;width:0.6px;height:284.89px;background:#eaeaea;"></div>
<div class="a" style="left:409.39px;top:95.2px;width:0.6px;height:7.17px;background:#d2d2d2;"></div>
<div class="a" style="left:409.39px;top:102.37px;width:0.6px;height:284.89px;background:#eaeaea;"></div>
<div class="a" style="left:441.38px;top:95.2px;width:0.6px;height:7.17px;background:#d2d2d2;"></div>
<div class="a" style="left:441.38px;top:102.37px;width:0.6px;height:284.89px;background:#eaeaea;"></div>
<div class="a" style="left:473.37px;top:95.2px;width:0.6px;height:7.17px;background:#d2d2d2;"></div>
<div class="a" style="left:473.37px;top:102.37px;width:0.6px;height:284.89px;background:#eaeaea;"></div>
<div class="a" style="left:505.36px;top:95.2px;width:0.6px;height:7.17px;background:#d2d2d2;"></div>
<div class="a" style="left:505.36px;top:102.37px;width:0.6px;height:284.89px;background:#eaeaea;"></div>
<div class="a" style="left:537.35px;top:95.2px;width:0.6px;height:7.17px;background:#d2d2d2;"></div>
<div class="a" style="left:537.35px;top:102.37px;width:0.6px;height:284.89px;background:#eaeaea;"></div>
<div class="a" style="left:569.34px;top:95.2px;width:0.6px;height:7.17px;background:#d2d2d2;"></div>
<div class="a" style="left:569.34px;top:102.37px;width:0.6px;height:284.89px;background:#eaeaea;"></div>
<div class="a" style="left:601.33px;top:95.2px;width:0.6px;height:7.17px;background:#d2d2d2;"></div>
<div class="a" style="left:601.33px;top:102.37px;width:0.6px;height:284.89px;background:#eaeaea;"></div>
<div class="a" style="left:633.32px;top:95.2px;width:0.6px;height:7.17px;background:#d2d2d2;"></div>
<div class="a" style="left:633.32px;top:102.37px;width:0.6px;height:284.89px;background:#eaeaea;"></div>
<div class="a" style="left:665.31px;top:95.2px;width:0.6px;height:7.17px;background:#d2d2d2;"></div>
<div class="a" style="left:665.31px;top:102.37px;width:0.6px;height:284.89px;background:#eaeaea;"></div>
<div class="a" style="left:697.3px;top:95.2px;width:0.6px;height:7.17px;background:#d2d2d2;"></div>
<div class="a" style="left:697.3px;top:102.37px;width:0.6px;height:284.89px;background:#eaeaea;"></div>
<div class="a" style="left:729.29px;top:95.2px;width:0.6px;height:7.17px;background:#d2d2d2;"></div>
<div class="a" style="left:729.29px;top:102.37px;width:0.6px;height:284.89px;background:#eaeaea;"></div>
<div class="a" style="left:0px;top:111.26px;width:13.4px;height:0.6px;background:#cdcdcd;"></div>
<div class="a" style="left:13.4px;top:111.26px;width:726.6px;height:0.6px;background:#ececec;"></div>
<div class="a" style="left:0px;top:120.45px;width:13.4px;height:0.6px;background:#cdcdcd;"></div>
<div class="a" style="left:13.4px;top:120.45px;width:726.6px;height:0.6px;background:#ececec;"></div>
<div class="a" style="left:0px;top:129.64px;width:13.4px;height:0.6px;background:#cdcdcd;"></div>
<div class="a" style="left:13.4px;top:129.64px;width:726.6px;height:0.6px;background:#ececec;"></div>
<div class="a" style="left:0px;top:138.83px;width:13.4px;height:0.6px;background:#cdcdcd;"></div>
<div class="a" style="left:13.4px;top:138.83px;width:726.6px;height:0.6px;background:#ececec;"></div>
<div class="a" style="left:0px;top:148.02px;width:13.4px;height:0.6px;background:#cdcdcd;"></div>
<div class="a" style="left:13.4px;top:148.02px;width:726.6px;height:0.6px;background:#ececec;"></div>
<div class="a" style="left:0px;top:157.21px;width:13.4px;height:0.6px;background:#cdcdcd;"></div>
<div class="a" style="left:13.4px;top:157.21px;width:726.6px;height:0.6px;background:#ececec;"></div>
<div class="a" style="left:0px;top:166.4px;width:13.4px;height:0.6px;background:#cdcdcd;"></div>
<div class="a" style="left:13.4px;top:166.4px;width:726.6px;height:0.6px;background:#ececec;"></div>
<div class="a" style="left:0px;top:175.59px;width:13.4px;height:0.6px;background:#cdcdcd;"></div>
<div class="a" style="left:13.4px;top:175.59px;width:726.6px;height:0.6px;background:#ececec;"></div>
<div class="a" style="left:0px;top:184.78px;width:13.4px;height:0.6px;background:#cdcdcd;"></div>
<div class="a" style="left:13.4px;top:184.78px;width:726.6px;height:0.6px;background:#ececec;"></div>
<div class="a" style="left:0px;top:193.97px;width:13.4px;height:0.6px;background:#cdcdcd;"></div>
<div class="a" style="left:13.4px;top:193.97px;width:726.6px;height:0.6px;background:#ececec;"></div>
<div class="a" style="left:0px;top:203.16px;width:13.4px;height:0.6px;background:#cdcdcd;"></div>
<div class="a" style="left:13.4px;top:203.16px;width:726.6px;height:0.6px;background:#ececec;"></div>
<div class="a" style="left:0px;top:212.35px;width:13.4px;height:0.6px;background:#cdcdcd;"></div>
<div class="a" style="left:13.4px;top:212.35px;width:726.6px;height:0.6px;background:#ececec;"></div>
<div class="a" style="left:0px;top:221.54px;width:13.4px;height:0.6px;background:#cdcdcd;"></div>
<div class="a" style="left:13.4px;top:221.54px;width:726.6px;height:0.6px;background:#ececec;"></div>
<div class="a" style="left:0px;top:230.73px;width:13.4px;height:0.6px;background:#cdcdcd;"></div>
<div class="a" style="left:13.4px;top:230.73px;width:726.6px;height:0.6px;background:#ececec;"></div>
<div class="a" style="left:0px;top:239.92px;width:13.4px;height:0.6px;background:#cdcdcd;"></div>
<div class="a" style="left:13.4px;top:239.92px;width:726.6px;height:0.6px;background:#ececec;"></div>
<div class="a" style="left:0px;top:249.11px;width:13.4px;height:0.6px;background:#cdcdcd;"></div>
<div class="a" style="left:13.4px;top:249.11px;width:726.6px;height:0.6px;background:#ececec;"></div>
<div class="a" style="left:0px;top:258.3px;width:13.4px;height:0.6px;background:#cdcdcd;"></div>
<div class="a" style="left:13.4px;top:258.3px;width:726.6px;height:0.6px;background:#ececec;"></div>
<div class="a" style="left:0px;top:267.49px;width:13.4px;height:0.6px;background:#cdcdcd;"></div>
<div class="a" style="left:13.4px;top:267.49px;width:726.6px;height:0.6px;background:#ececec;"></div>
<div class="a" style="left:0px;top:276.68px;width:13.4px;height:0.6px;background:#cdcdcd;"></div>
<div class="a" style="left:13.4px;top:276.68px;width:726.6px;height:0.6px;background:#ececec;"></div>
<div class="a" style="left:0px;top:285.87px;width:13.4px;height:0.6px;background:#cdcdcd;"></div>
<div class="a" style="left:13.4px;top:285.87px;width:726.6px;height:0.6px;background:#ececec;"></div>
<div class="a" style="left:0px;top:295.06px;width:13.4px;height:0.6px;background:#cdcdcd;"></div>
<div class="a" style="left:13.4px;top:295.06px;width:726.6px;height:0.6px;background:#ececec;"></div>
<div class="a" style="left:0px;top:304.25px;width:13.4px;height:0.6px;background:#cdcdcd;"></div>
<div class="a" style="left:13.4px;top:304.25px;width:726.6px;height:0.6px;background:#ececec;"></div>
<div class="a" style="left:0px;top:313.44px;width:13.4px;height:0.6px;background:#cdcdcd;"></div>
<div class="a" style="left:13.4px;top:313.44px;width:726.6px;height:0.6px;background:#ececec;"></div>
<div class="a" style="left:0px;top:322.63px;width:13.4px;height:0.6px;background:#cdcdcd;"></div>
<div class="a" style="left:13.4px;top:322.63px;width:726.6px;height:0.6px;background:#ececec;"></div>
<div class="a" style="left:0px;top:331.82px;width:13.4px;height:0.6px;background:#cdcdcd;"></div>
<div class="a" style="left:13.4px;top:331.82px;width:726.6px;height:0.6px;background:#ececec;"></div>
<div class="a" style="left:0px;top:341.01px;width:13.4px;height:0.6px;background:#cdcdcd;"></div>
<div class="a" style="left:13.4px;top:341.01px;width:726.6px;height:0.6px;background:#ececec;"></div>
<div class="a" style="left:0px;top:350.2px;width:13.4px;height:0.6px;background:#cdcdcd;"></div>
<div class="a" style="left:13.4px;top:350.2px;width:726.6px;height:0.6px;background:#ececec;"></div>
<div class="a" style="left:0px;top:359.39px;width:13.4px;height:0.6px;background:#cdcdcd;"></div>
<div class="a" style="left:13.4px;top:359.39px;width:726.6px;height:0.6px;background:#ececec;"></div>
<div class="a" style="left:0px;top:368.58px;width:13.4px;height:0.6px;background:#cdcdcd;"></div>
<div class="a" style="left:13.4px;top:368.58px;width:726.6px;height:0.6px;background:#ececec;"></div>
<div class="a" style="left:0px;top:377.77px;width:13.4px;height:0.6px;background:#cdcdcd;"></div>
<div class="a" style="left:13.4px;top:377.77px;width:726.6px;height:0.6px;background:#ececec;"></div>
<div class="a" style="left:13.4px;top:111.56px;width:364.3px;height:9.19px;background:#5b9bd5;"></div>
<div class="a" style="left:13.4px;top:120.75px;width:364.3px;height:55.14px;background:#ddebf7;"></div>
<div class="a" style="left:0px;top:102.02px;width:740px;height:0.6px;background:#c0c0c0;"></div>
<div class="a" style="left:13.05px;top:102.37px;width:0.6px;height:284.89px;background:#bdbdbd;"></div>
<div class="a" style="left:13.4px;top:101.77px;width:60.3px;height:0.9px;background:#217346;"></div>
<div class="a" style="left:12.7px;top:120.75px;width:0.8px;height:9.19px;background:#217346;"></div>
<div class="a" style="left:13.4px;top:129.64px;width:364.3px;height:0.6px;background:#c0d8ef;"></div>
<div class="a" style="left:13.4px;top:138.83px;width:364.3px;height:0.6px;background:#c0d8ef;"></div>
<div class="a" style="left:13.4px;top:148.02px;width:364.3px;height:0.6px;background:#c0d8ef;"></div>
<div class="a" style="left:13.4px;top:157.21px;width:364.3px;height:0.6px;background:#c0d8ef;"></div>
<div class="a" style="left:13.4px;top:166.4px;width:364.3px;height:0.6px;background:#c0d8ef;"></div>
<div class="a" style="left:13.4px;top:175.59px;width:364.3px;height:0.6px;background:#c0d8ef;"></div>
<div class="t" style="left:41.02px;top:96px;font-size:7px;font-family:'Liberation Serif',serif;color:#217346;text-shadow:0 0 0.4px rgba(33,115,70,0.7);">A</div>
<div class="t" style="left:110.17px;top:96px;font-size:7px;font-family:'Liberation Serif',serif;color:#2a2a2a;text-shadow:0 0 0.4px rgba(42,42,42,0.7);">B</div>
<div class="t" style="left:179.22px;top:96px;font-size:7px;font-family:'Liberation Serif',serif;color:#2a2a2a;text-shadow:0 0 0.4px rgba(42,42,42,0.7);">C</div>
<div class="t" style="left:227.67px;top:96px;font-size:7px;font-family:'Liberation Serif',serif;color:#2a2a2a;text-shadow:0 0 0.4px rgba(42,42,42,0.7);">D</div>
<div class="t" style="left:273.11px;top:96px;font-size:7px;font-family:'Liberation Serif',serif;color:#2a2a2a;text-shadow:0 0 0.4px rgba(42,42,42,0.7);">E</div>
<div class="t" style="left:318.9px;top:96px;font-size:7px;font-family:'Liberation Serif',serif;color:#2a2a2a;text-shadow:0 0 0.4px rgba(42,42,42,0.7);">F</div>
<div class="t" style="left:356.22px;top:96px;font-size:7px;font-family:'Liberation Serif',serif;color:#2a2a2a;text-shadow:0 0 0.4px rgba(42,42,42,0.7);">G</div>
<div class="t" style="left:391.17px;top:96px;font-size:7px;font-family:'Liberation Serif',serif;color:#2a2a2a;text-shadow:0 0 0.4px rgba(42,42,42,0.7);">H</div>
<div class="t" style="left:424.52px;top:96px;font-size:7px;font-family:'Liberation Serif',serif;color:#2a2a2a;text-shadow:0 0 0.4px rgba(42,42,42,0.7);">I</div>
<div class="t" style="left:456.31px;top:96px;font-size:7px;font-family:'Liberation Serif',serif;color:#2a2a2a;text-shadow:0 0 0.4px rgba(42,42,42,0.7);">J</div>
<div class="t" style="left:487.14px;top:96px;font-size:7px;font-family:'Liberation Serif',serif;color:#2a2a2a;text-shadow:0 0 0.4px rgba(42,42,42,0.7);">K</div>
<div class="t" style="left:519.52px;top:96px;font-size:7px;font-family:'Liberation Serif',serif;color:#2a2a2a;text-shadow:0 0 0.4px rgba(42,42,42,0.7);">L</div>
<div class="t" style="left:550.53px;top:96px;font-size:7px;font-family:'Liberation Serif',serif;color:#2a2a2a;text-shadow:0 0 0.4px rgba(42,42,42,0.7);">M</div>
<div class="t" style="left:583.11px;top:96px;font-size:7px;font-family:'Liberation Serif',serif;color:#2a2a2a;text-shadow:0 0 0.4px rgba(42,42,42,0.7);">N</div>
<div class="t" style="left:615.1px;top:96px;font-size:7px;font-family:'Liberation Serif',serif;color:#2a2a2a;text-shadow:0 0 0.4px rgba(42,42,42,0.7);">O</div>
<div class="t" style="left:647.67px;top:96px;font-size:7px;font-family:'Liberation Serif',serif;color:#2a2a2a;text-shadow:0 0 0.4px rgba(42,42,42,0.7);">P</div>
<div class="t" style="left:679.08px;top:96px;font-size:7px;font-family:'Liberation Serif',serif;color:#2a2a2a;text-shadow:0 0 0.4px rgba(42,42,42,0.7);">Q</div>
<div class="t" style="left:711.26px;top:96px;font-size:7px;font-family:'Liberation Serif',serif;color:#2a2a2a;text-shadow:0 0 0.4px rgba(42,42,42,0.7);">R</div>
<div class="t" style="left:5.28px;top:106px;font-size:6.9px;font-family:'Liberation Serif',serif;color:#2a2a2a;text-shadow:0 0 0.4px rgba(42,42,42,0.5);">1</div>
<div class="t" style="left:5.28px;top:115px;font-size:6.9px;font-family:'Liberation Serif',serif;color:#2a2a2a;text-shadow:0 0 0.4px rgba(42,42,42,0.5);">2</div>
<div class="t" style="left:5.28px;top:124px;font-size:6.9px;font-family:'Liberation Serif',serif;color:#217346;text-shadow:0 0 0.4px rgba(33,115,70,0.5);">3</div>
<div class="t" style="left:5.28px;top:133px;font-size:6.9px;font-family:'Liberation Serif',serif;color:#2a2a2a;text-shadow:0 0 0.4px rgba(42,42,42,0.5);">4</div>
<div class="t" style="left:5.28px;top:142px;font-size:6.9px;font-family:'Liberation Serif',serif;color:#2a2a2a;text-shadow:0 0 0.4px rgba(42,42,42,0.5);">5</div>
<div class="t" style="left:5.28px;top:152px;font-size:6.9px;font-family:'Liberation Serif',serif;color:#2a2a2a;text-shadow:0 0 0.4px rgba(42,42,42,0.5);">6</div>
<div class="t" style="left:5.28px;top:161px;font-size:6.9px;font-family:'Liberation Serif',serif;color:#2a2a2a;text-shadow:0 0 0.4px rgba(42,42,42,0.5);">7</div>
<div class="t" style="left:5.28px;top:170px;font-size:6.9px;font-family:'Liberation Serif',serif;color:#2a2a2a;text-shadow:0 0 0.4px rgba(42,42,42,0.5);">8</div>
<div class="t" style="left:5.28px;top:179px;font-size:6.9px;font-family:'Liberation Serif',serif;color:#2a2a2a;text-shadow:0 0 0.4px rgba(42,42,42,0.5);">9</div>
<div class="t" style="left:3.55px;top:188px;font-size:6.9px;font-family:'Liberation Serif',serif;color:#2a2a2a;text-shadow:0 0 0.4px rgba(42,42,42,0.5);">10</div>
<div class="t" style="left:3.68px;top:198px;font-size:6.9px;font-family:'Liberation Serif',serif;color:#2a2a2a;text-shadow:0 0 0.4px rgba(42,42,42,0.5);">11</div>
<div class="t" style="left:3.55px;top:207px;font-size:6.9px;font-family:'Liberation Serif',serif;color:#2a2a2a;text-shadow:0 0 0.4px rgba(42,42,42,0.5);">12</div>
<div class="t" style="left:3.55px;top:216px;font-size:6.9px;font-family:'Liberation Serif',serif;color:#2a2a2a;text-shadow:0 0 0.4px rgba(42,42,42,0.5);">13</div>
<div class="t" style="left:3.55px;top:225px;font-size:6.9px;font-family:'Liberation Serif',serif;color:#2a2a2a;text-shadow:0 0 0.4px rgba(42,42,42,0.5);">14</div>
<div class="t" style="left:3.55px;top:234px;font-size:6.9px;font-family:'Liberation Serif',serif;color:#2a2a2a;text-shadow:0 0 0.4px rgba(42,42,42,0.5);">15</div>
<div class="t" style="left:3.55px;top:244px;font-size:6.9px;font-family:'Liberation Serif',serif;color:#2a2a2a;text-shadow:0 0 0.4px rgba(42,42,42,0.5);">16</div>
<div class="t" style="left:3.55px;top:253px;font-size:6.9px;font-family:'Liberation Serif',serif;color:#2a2a2a;text-shadow:0 0 0.4px rgba(42,42,42,0.5);">17</div>
<div class="t" style="left:3.55px;top:262px;font-size:6.9px;font-family:'Liberation Serif',serif;color:#2a2a2a;text-shadow:0 0 0.4px rgba(42,42,42,0.5);">18</div>
<div class="t" style="left:3.55px;top:271px;font-size:6.9px;font-family:'Liberation Serif',serif;color:#2a2a2a;text-shadow:0 0 0.4px rgba(42,42,42,0.5);">19</div>
<div class="t" style="left:3.55px;top:280px;font-size:6.9px;font-family:'Liberation Serif',serif;color:#2a2a2a;text-shadow:0 0 0.4px rgba(42,42,42,0.5);">20</div>
<div class="t" style="left:3.55px;top:289px;font-size:6.9px;font-family:'Liberation Serif',serif;color:#2a2a2a;text-shadow:0 0 0.4px rgba(42,42,42,0.5);">21</div>
<div class="t" style="left:3.55px;top:299px;font-size:6.9px;font-family:'Liberation Serif',serif;color:#2a2a2a;text-shadow:0 0 0.4px rgba(42,42,42,0.5);">22</div>
<div class="t" style="left:3.55px;top:308px;font-size:6.9px;font-family:'Liberation Serif',serif;color:#2a2a2a;text-shadow:0 0 0.4px rgba(42,42,42,0.5);">23</div>
<div class="t" style="left:3.55px;top:317px;font-size:6.9px;font-family:'Liberation Serif',serif;color:#2a2a2a;text-shadow:0 0 0.4px rgba(42,42,42,0.5);">24</div>
<div class="t" style="left:3.55px;top:326px;font-size:6.9px;font-family:'Liberation Serif',serif;color:#2a2a2a;text-shadow:0 0 0.4px rgba(42,42,42,0.5);">25</div>
<div class="t" style="left:3.55px;top:335px;font-size:6.9px;font-family:'Liberation Serif',serif;color:#2a2a2a;text-shadow:0 0 0.4px rgba(42,42,42,0.5);">26</div>
<div class="t" style="left:3.55px;top:345px;font-size:6.9px;font-family:'Liberation Serif',serif;color:#2a2a2a;text-shadow:0 0 0.4px rgba(42,42,42,0.5);">27</div>
<div class="t" style="left:3.55px;top:354px;font-size:6.9px;font-family:'Liberation Serif',serif;color:#2a2a2a;text-shadow:0 0 0.4px rgba(42,42,42,0.5);">28</div>
<div class="t" style="left:3.55px;top:363px;font-size:6.9px;font-family:'Liberation Serif',serif;color:#2a2a2a;text-shadow:0 0 0.4px rgba(42,42,42,0.5);">29</div>
<div class="t" style="left:3.55px;top:372px;font-size:6.9px;font-family:'Liberation Serif',serif;color:#2a2a2a;text-shadow:0 0 0.4px rgba(42,42,42,0.5);">30</div>
<div class="t" style="left:3.55px;top:381px;font-size:6.9px;font-family:'Liberation Serif',serif;color:#2a2a2a;text-shadow:0 0 0.4px rgba(42,42,42,0.5);">31</div>
<div class="t" style="left:15.0px;top:114px;font-size:7.1px;font-family:'Liberation Serif',serif;font-weight:bold;color:#fff;letter-spacing:0.05px;text-shadow:0 0 0.4px rgba(255,255,255,0.28);">Material Type</div>
<div class="t" style="left:75.2px;top:114px;font-size:7.1px;font-family:'Liberation Serif',serif;font-weight:bold;color:#fff;text-shadow:0 0 0.4px rgba(255,255,255,0.28);">Material</div>
<div class="t" style="left:152.8px;top:114px;font-size:7.1px;font-family:'Liberation Serif',serif;font-weight:bold;color:#fff;text-shadow:0 0 0.4px rgba(255,255,255,0.28);">Vendor</div>
<div class="t" style="left:213.3px;top:114px;font-size:7.1px;font-family:'Liberation Serif',serif;font-weight:bold;color:#fff;text-shadow:0 0 0.4px rgba(255,255,255,0.28);">Unit</div>
<div class="t" style="left:249.3px;top:114px;font-size:7.1px;font-family:'Liberation Serif',serif;font-weight:bold;color:#fff;letter-spacing:0.08px;text-shadow:0 0 0.4px rgba(255,255,255,0.28);">Price Per Unit</div>
<div class="t" style="left:303.4px;top:114px;font-size:7.1px;font-family:'Liberation Serif',serif;font-weight:bold;color:#fff;letter-spacing:0.05px;text-shadow:0 0 0.4px rgba(255,255,255,0.28);">Quantity</div>
<div class="t" style="left:340.5px;top:114px;font-size:7.1px;font-family:'Liberation Serif',serif;font-weight:bold;color:#fff;letter-spacing:0.31px;text-shadow:0 0 0.4px rgba(255,255,255,0.28);">Price</div>
<div class="a" style="left:65.3px;top:112.36px;width:7.8px;height:7.89px;background:#f5f5f5;border:0.4px solid #d0d0d0"></div>
<svg class="a" style="left:68.2px;top:115.56px;" width="2.4" height="1.6" viewBox="0 0 2.4 1.6"><path d="M0 0H2.4L1.2 1.5Z" fill="#505050"/></svg>
<div class="a" style="left:142.9px;top:112.36px;width:7.8px;height:7.89px;background:#f5f5f5;border:0.4px solid #d0d0d0"></div>
<svg class="a" style="left:145.8px;top:115.56px;" width="2.4" height="1.6" viewBox="0 0 2.4 1.6"><path d="M0 0H2.4L1.2 1.5Z" fill="#505050"/></svg>
<div class="a" style="left:203.4px;top:112.36px;width:7.8px;height:7.89px;background:#f5f5f5;border:0.4px solid #d0d0d0"></div>
<svg class="a" style="left:206.3px;top:115.56px;" width="2.4" height="1.6" viewBox="0 0 2.4 1.6"><path d="M0 0H2.4L1.2 1.5Z" fill="#505050"/></svg>
<div class="a" style="left:240.2px;top:112.36px;width:7.8px;height:7.89px;background:#f5f5f5;border:0.4px solid #d0d0d0"></div>
<svg class="a" style="left:243.1px;top:115.56px;" width="2.4" height="1.6" viewBox="0 0 2.4 1.6"><path d="M0 0H2.4L1.2 1.5Z" fill="#505050"/></svg>
<div class="a" style="left:293.5px;top:112.36px;width:7.8px;height:7.89px;background:#f5f5f5;border:0.4px solid #d0d0d0"></div>
<svg class="a" style="left:296.4px;top:115.56px;" width="2.4" height="1.6" viewBox="0 0 2.4 1.6"><path d="M0 0H2.4L1.2 1.5Z" fill="#505050"/></svg>
<div class="a" style="left:331.4px;top:112.36px;width:7.8px;height:7.89px;background:#f5f5f5;border:0.4px solid #d0d0d0"></div>
<svg class="a" style="left:334.3px;top:115.56px;" width="2.4" height="1.6" viewBox="0 0 2.4 1.6"><path d="M0 0H2.4L1.2 1.5Z" fill="#505050"/></svg>
<div class="a" style="left:369.3px;top:112.36px;width:7.8px;height:7.89px;background:#f5f5f5;border:0.4px solid #d0d0d0"></div>
<svg class="a" style="left:372.2px;top:115.56px;" width="2.4" height="1.6" viewBox="0 0 2.4 1.6"><path d="M0 0H2.4L1.2 1.5Z" fill="#505050"/></svg>
<div class="t" style="left:179.8px;top:105px;font-size:7.05px;font-family:'Liberation Serif',serif;color:#222;letter-spacing:0.01px;text-shadow:0 0 0.4px rgba(34,34,34,0.28);">Platform A</div>
<div class="t" style="left:15.0px;top:123px;font-size:7.05px;font-family:'Liberation Serif',serif;color:#222;letter-spacing:0.04px;text-shadow:0 0 0.4px rgba(34,34,34,0.28);">Sheet_Goods</div>
<div class="t" style="left:75.2px;top:123px;font-size:7.05px;font-family:'Liberation Serif',serif;color:#222;text-shadow:0 0 0.4px rgba(34,34,34,0.28);">3/4" AC Ply</div>
<div class="t" style="left:152.8px;top:123px;font-size:7.05px;font-family:'Liberation Serif',serif;color:#222;text-shadow:0 0 0.4px rgba(34,34,34,0.28);">Mosher</div>
<div class="t" style="left:213.3px;top:123px;font-size:7.05px;font-family:'Liberation Serif',serif;color:#222;text-shadow:0 0 0.4px rgba(34,34,34,0.28);">4'x8' Sheet</div>
<div class="t" style="left:281.01px;top:123px;font-size:7.05px;font-family:'Liberation Serif',serif;color:#222;text-shadow:0 0 0.4px rgba(34,34,34,0.28);">$40.40</div>
<div class="t" style="left:334.18px;top:123px;font-size:7.05px;font-family:'Liberation Serif',serif;color:#222;text-shadow:0 0 0.4px rgba(34,34,34,0.28);">2</div>
<div class="t" style="left:356.81px;top:123px;font-size:7.05px;font-family:'Liberation Serif',serif;color:#222;text-shadow:0 0 0.4px rgba(34,34,34,0.28);">$80.80</div>
<div class="t" style="left:75.2px;top:132px;font-size:7.05px;font-family:'Liberation Serif',serif;color:#222;text-shadow:0 0 0.4px rgba(34,34,34,0.28);">2x10 #2 Pine</div>
<div class="t" style="left:152.8px;top:132px;font-size:7.05px;font-family:'Liberation Serif',serif;color:#222;text-shadow:0 0 0.4px rgba(34,34,34,0.28);">Mosher</div>
<div class="t" style="left:213.3px;top:132px;font-size:7.05px;font-family:'Liberation Serif',serif;color:#222;text-shadow:0 0 0.4px rgba(34,34,34,0.28);">PLF</div>
<div class="t" style="left:284.54px;top:132px;font-size:7.05px;font-family:'Liberation Serif',serif;color:#222;text-shadow:0 0 0.4px rgba(34,34,34,0.28);">$1.68</div>
<div class="t" style="left:330.65px;top:132px;font-size:7.05px;font-family:'Liberation Serif',serif;color:#222;text-shadow:0 0 0.4px rgba(34,34,34,0.28);">48</div>
<div class="t" style="left:356.81px;top:132px;font-size:7.05px;font-family:'Liberation Serif',serif;color:#222;text-shadow:0 0 0.4px rgba(34,34,34,0.28);">$80.64</div>
<div class="t" style="left:75.2px;top:141px;font-size:7.05px;font-family:'Liberation Serif',serif;color:#222;text-shadow:0 0 0.4px rgba(34,34,34,0.28);">2x4 #2 Pine</div>
<div class="t" style="left:152.8px;top:141px;font-size:7.05px;font-family:'Liberation Serif',serif;color:#222;text-shadow:0 0 0.4px rgba(34,34,34,0.28);">Mosher</div>
<div class="t" style="left:213.3px;top:141px;font-size:7.05px;font-family:'Liberation Serif',serif;color:#222;text-shadow:0 0 0.4px rgba(34,34,34,0.28);">PLF</div>
<div class="t" style="left:284.54px;top:141px;font-size:7.05px;font-family:'Liberation Serif',serif;color:#222;text-shadow:0 0 0.4px rgba(34,34,34,0.28);">$0.53</div>
<div class="t" style="left:330.65px;top:141px;font-size:7.05px;font-family:'Liberation Serif',serif;color:#222;text-shadow:0 0 0.4px rgba(34,34,34,0.28);">32</div>
<div class="t" style="left:356.81px;top:141px;font-size:7.05px;font-family:'Liberation Serif',serif;color:#222;text-shadow:0 0 0.4px rgba(34,34,34,0.28);">$16.96</div>
<div class="t" style="left:75.2px;top:151px;font-size:7.05px;font-family:'Liberation Serif',serif;color:#222;text-shadow:0 0 0.4px rgba(34,34,34,0.28);">1x4 #2 Pine</div>
<div class="t" style="left:152.8px;top:151px;font-size:7.05px;font-family:'Liberation Serif',serif;color:#222;text-shadow:0 0 0.4px rgba(34,34,34,0.28);">Mosher</div>
<div class="t" style="left:213.3px;top:151px;font-size:7.05px;font-family:'Liberation Serif',serif;color:#222;text-shadow:0 0 0.4px rgba(34,34,34,0.28);">PLF</div>
<div class="t" style="left:284.54px;top:151px;font-size:7.05px;font-family:'Liberation Serif',serif;color:#222;text-shadow:0 0 0.4px rgba(34,34,34,0.28);">$0.53</div>
<div class="t" style="left:330.65px;top:151px;font-size:7.05px;font-family:'Liberation Serif',serif;color:#222;text-shadow:0 0 0.4px rgba(34,34,34,0.28);">12</div>
<div class="t" style="left:360.34px;top:151px;font-size:7.05px;font-family:'Liberation Serif',serif;color:#222;text-shadow:0 0 0.4px rgba(34,34,34,0.28);">$6.36</div>
<div class="t" style="left:15.0px;top:160px;font-size:7.05px;font-family:'Liberation Serif',serif;color:#222;letter-spacing:0.04px;text-shadow:0 0 0.4px rgba(34,34,34,0.28);">Sheet_Goods</div>
<div class="t" style="left:75.2px;top:160px;font-size:7.05px;font-family:'Liberation Serif',serif;color:#222;text-shadow:0 0 0.4px rgba(34,34,34,0.28);">1/4" Brick Hardboard</div>
<div class="t" style="left:152.8px;top:160px;font-size:7.05px;font-family:'Liberation Serif',serif;color:#222;text-shadow:0 0 0.4px rgba(34,34,34,0.28);">Len-Co</div>
<div class="t" style="left:213.3px;top:160px;font-size:7.05px;font-family:'Liberation Serif',serif;color:#222;text-shadow:0 0 0.4px rgba(34,34,34,0.28);">4'x8' Sheet</div>
<div class="t" style="left:281.01px;top:160px;font-size:7.05px;font-family:'Liberation Serif',serif;color:#222;text-shadow:0 0 0.4px rgba(34,34,34,0.28);">$12.88</div>
<div class="t" style="left:334.18px;top:160px;font-size:7.05px;font-family:'Liberation Serif',serif;color:#222;text-shadow:0 0 0.4px rgba(34,34,34,0.28);">3</div>
<div class="t" style="left:356.81px;top:160px;font-size:7.05px;font-family:'Liberation Serif',serif;color:#222;text-shadow:0 0 0.4px rgba(34,34,34,0.28);">$38.64</div>
<div class="t" style="left:303.4px;top:169px;font-size:7.05px;font-family:'Liberation Serif',serif;font-weight:bold;color:#222;letter-spacing:0.22px;text-shadow:0 0 0.4px rgba(34,34,34,0.28);">Total</div>
<div class="t" style="left:352.4px;top:169px;font-size:7.05px;font-family:'Liberation Serif',serif;font-weight:bold;color:#222;letter-spacing:0.15px;text-shadow:0 0 0.4px rgba(34,34,34,0.28);">$223.40</div>
<svg class="a" style="left:375.6px;top:173.49px;" width="2.4" height="2.4" viewBox="0 0 2.4 2.4"><path d="M2.4 0V2.4H0Z" fill="#2f5f8f"/></svg>
<div class="a" style="left:12.9px;top:120.25px;width:61.3px;height:10.19px;border:1px solid #4b8d69"></div>
<div class="a" style="left:75px;top:121.65px;width:6.5px;height:7.69px;background:#e9e9e9;"></div>
<svg class="a" style="left:76.8px;top:124.85px;" width="2.6" height="1.7" viewBox="0 0 2.6 1.7"><path d="M0 0H2.6L1.3 1.6Z" fill="#444"/></svg>
<div class="a" style="left:4.1px;top:130px;width:77.7px;height:27.6px;background:#fff;border:0.7px solid #6a6a6a"></div>
<div class="a" style="left:4.8px;top:137.4px;width:76.3px;height:6.4px;background:#0078d7;"></div>
<div class="t" style="left:6.1px;top:134px;font-size:4.9px;font-family:'Liberation Sans',sans-serif;color:#222;text-shadow:0 0 0.4px rgba(34,34,34,0.28);">Stick_Goods</div>
<div class="t" style="left:6.1px;top:141px;font-size:4.9px;font-family:'Liberation Sans',sans-serif;color:#fff;text-shadow:0 0 0.4px rgba(255,255,255,0.28);">Sheet_Goods</div>
<div class="t" style="left:6.1px;top:148px;font-size:4.9px;font-family:'Liberation Sans',sans-serif;color:#222;text-shadow:0 0 0.4px rgba(34,34,34,0.28);">Fabric</div>
<div class="t" style="left:6.1px;top:155px;font-size:4.9px;font-family:'Liberation Sans',sans-serif;color:#222;text-shadow:0 0 0.4px rgba(34,34,34,0.28);">Metal</div>
<div class="a" style="left:0px;top:387.26px;width:740px;height:13.44px;background:#e6e6e6;"></div>
<div class="a" style="left:0px;top:386.96px;width:740px;height:0.6px;background:#bcbcbc;"></div>
<div class="a" style="left:81.7px;top:387.26px;width:45px;height:11.84px;background:#fff;"></div>
<div class="a" style="left:81.7px;top:398px;width:45px;height:0.9px;background:#217346;"></div>
<div class="a" style="left:81.4px;top:387.26px;width:0.5px;height:11px;background:#c9c9c9;"></div>
<div class="a" style="left:126.5px;top:387.26px;width:0.5px;height:11px;background:#c9c9c9;"></div>
<div class="t" style="left:46.6px;top:391px;font-size:6.5px;font-family:'Liberation Sans',sans-serif;color:#5a5a5a;letter-spacing:0.1px;text-shadow:0 0 0.4px rgba(90,90,90,0.28);">Summary</div>
<div class="t" style="left:132.6px;top:391px;font-size:6.5px;font-family:'Liberation Sans',sans-serif;color:#5a5a5a;letter-spacing:0.12px;text-shadow:0 0 0.4px rgba(90,90,90,0.28);">Platform B</div>
<div class="t" style="left:176.6px;top:391px;font-size:6.5px;font-family:'Liberation Sans',sans-serif;color:#5a5a5a;letter-spacing:0.14px;text-shadow:0 0 0.4px rgba(90,90,90,0.28);">Platform C</div>
<div class="t" style="left:221.0px;top:391px;font-size:6.5px;font-family:'Liberation Sans',sans-serif;color:#5a5a5a;letter-spacing:0.21px;text-shadow:0 0 0.4px rgba(90,90,90,0.28);">Platform D</div>
<div class="t" style="left:265.6px;top:391px;font-size:6.5px;font-family:'Liberation Sans',sans-serif;color:#5a5a5a;letter-spacing:0.04px;text-shadow:0 0 0.4px rgba(90,90,90,0.28);">D Stairs</div>
<div class="t" style="left:300.6px;top:391px;font-size:6.5px;font-family:'Liberation Sans',sans-serif;color:#5a5a5a;letter-spacing:0.29px;text-shadow:0 0 0.4px rgba(90,90,90,0.28);">Window Unit</div>
<div class="t" style="left:352.6px;top:391px;font-size:6.5px;font-family:'Liberation Sans',sans-serif;color:#5a5a5a;letter-spacing:0.07px;text-shadow:0 0 0.4px rgba(90,90,90,0.28);">Doorways</div>
<div class="t" style="left:394.6px;top:391px;font-size:6.5px;font-family:'Liberation Sans',sans-serif;color:#5a5a5a;letter-spacing:0.15px;text-shadow:0 0 0.4px rgba(90,90,90,0.28);">Platform A Stairs</div>
<div class="t" style="left:459.6px;top:391px;font-size:6.5px;font-family:'Liberation Sans',sans-serif;color:#5a5a5a;letter-spacing:0.08px;text-shadow:0 0 0.4px rgba(90,90,90,0.28);">Platform B Stairs</div>
<div class="t" style="left:524.0px;top:391px;font-size:6.5px;font-family:'Liberation Sans',sans-serif;color:#5a5a5a;letter-spacing:0.08px;text-shadow:0 0 0.4px rgba(90,90,90,0.28);">Platform B-C Steps</div>
<div class="t" style="left:86.6px;top:391px;font-size:6.5px;font-family:'Liberation Sans',sans-serif;font-weight:bold;color:#217346;letter-spacing:0.24px;text-shadow:0 0 0.4px rgba(33,115,70,0.28);">Platform A</div>
<div class="a" style="left:40.95px;top:390px;width:0.55px;height:8px;background:#b8b8b8;"></div>
<div class="a" style="left:170.35px;top:390px;width:0.55px;height:8px;background:#b8b8b8;"></div>
<div class="a" style="left:214.15px;top:390px;width:0.55px;height:8px;background:#b8b8b8;"></div>
<div class="a" style="left:260.15px;top:390px;width:0.55px;height:8px;background:#b8b8b8;"></div>
<div class="a" style="left:294.75px;top:390px;width:0.55px;height:8px;background:#b8b8b8;"></div>
<div class="a" style="left:346.35px;top:390px;width:0.55px;height:8px;background:#b8b8b8;"></div>
<div class="a" style="left:387.35px;top:390px;width:0.55px;height:8px;background:#b8b8b8;"></div>
<div class="a" style="left:452.15px;top:390px;width:0.55px;height:8px;background:#b8b8b8;"></div>
<div class="a" style="left:516.35px;top:390px;width:0.55px;height:8px;background:#b8b8b8;"></div>
<div class="a" style="left:587.95px;top:390px;width:0.55px;height:8px;background:#b8b8b8;"></div>
<svg class="a" style="left:11.4px;top:392.6px;" width="2" height="3.2" viewBox="0 0 2 3.2"><path d="M2 0V3.2L0 1.6Z" fill="#c2c2c2"/></svg>
<svg class="a" style="left:22.8px;top:392.6px;" width="2" height="3.2" viewBox="0 0 2 3.2"><path d="M0 0V3.2L2 1.6Z" fill="#217346"/></svg>
<div class="t" style="left:596.2px;top:391px;font-size:6.5px;font-family:'Liberation Sans',sans-serif;font-weight:bold;color:#6fa587;letter-spacing:0.34px;text-shadow:0 0 0.4px rgba(111,165,135,0.8);">...</div>
<svg class="a" style="left:606.3px;top:390.3px;" width="8.6" height="8.6" viewBox="0 0 8.6 8.6"><circle cx="4.3" cy="4.3" r="3.5" fill="none" stroke="#4a4a4a" stroke-width="0.7"/><path d="M4.3 2.3V6.3M2.3 4.3H6.3" stroke="#4a4a4a" stroke-width="0.7"/></svg>
<div class="a" style="left:622.1px;top:392.0px;width:0.6px;height:0.6px;background:#b4b4b4;"></div>
<div class="a" style="left:622.1px;top:393.5px;width:0.6px;height:0.6px;background:#b4b4b4;"></div>
<div class="a" style="left:622.1px;top:395.0px;width:0.6px;height:0.6px;background:#b4b4b4;"></div>
<div class="a" style="left:622.1px;top:396.5px;width:0.6px;height:0.6px;background:#b4b4b4;"></div>
<div class="a" style="left:629.3px;top:390.6px;width:110.7px;height:8px;background:#fff;"></div>
<div class="a" style="left:629.3px;top:390.4px;width:110.7px;height:0.5px;background:#c8c8c8;"></div>
<div class="a" style="left:636.4px;top:390.6px;width:0.5px;height:8px;background:#c8c8c8;"></div>
<svg class="a" style="left:631.6px;top:392.9px;" width="2" height="3.2" viewBox="0 0 2 3.2"><path d="M2 0V3.2L0 1.6Z" fill="#444"/></svg>
<div class="a" style="left:0px;top:400.7px;width:740px;height:7.3px;background:#f1f1f1;"></div>
<div class="t" style="left:3.0px;top:404px;font-size:4.7px;font-family:'Liberation Sans',sans-serif;color:#555;letter-spacing:0.25px;text-shadow:0 0 0.4px rgba(85,85,85,0.28);">Ready</div>
<div class="a" style="left:688px;top:405px;width:52px;height:0.5px;background:#a6a6a6;"></div>
<div class="a" style="left:712.2px;top:402.3px;width:1.6px;height:5.7px;background:#444;"></div>
<div class="a" style="left:683px;top:404.9px;width:3.4px;height:0.7px;background:#555;"></div>
<div class="a" style="left:632.5px;top:400.7px;width:15px;height:7.3px;background:#cbcbcb;"></div>
<svg class="a" style="left:637.3px;top:402.4px;" width="5.4" height="5" viewBox="0 0 5.4 5"><rect x="0.3" y="0.3" width="4.8" height="4.4" fill="none" stroke="#6a6a6a" stroke-width="0.5"/><path d="M2.7 0.3V4.7M0.3 2.5H5.1" stroke="#6a6a6a" stroke-width="0.5"/></svg>
<svg class="a" style="left:653.4px;top:402.4px;" width="5.4" height="5" viewBox="0 0 5.4 5"><rect x="0.3" y="0.3" width="4.8" height="4.4" fill="none" stroke="#8a8a8a" stroke-width="0.5"/><rect x="1.5" y="1.3" width="2.4" height="3.4" fill="none" stroke="#8a8a8a" stroke-width="0.4"/></svg>
<svg class="a" style="left:669.8px;top:402.2px;" width="5.6" height="5.2" viewBox="0 0 5.6 5.2"><rect x="0.3" y="0.3" width="5" height="4.6" fill="none" stroke="#8a8a8a" stroke-width="0.5"/><path d="M1.8 0.3V2.6H3.8V0.3M0.3 3.4H5.3" fill="none" stroke="#8a8a8a" stroke-width="0.4"/></svg>
</div></body></html>
